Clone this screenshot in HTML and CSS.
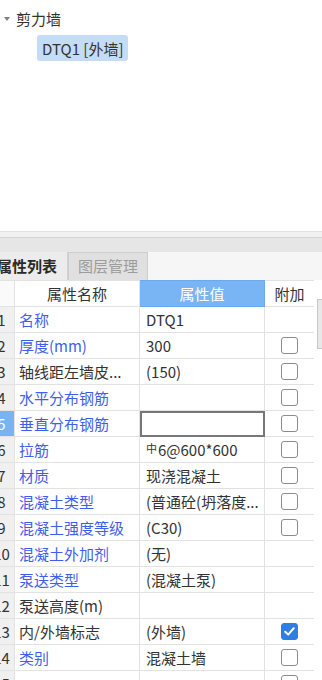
FILE: index.html
```html
<!DOCTYPE html>
<html lang="zh-CN">
<head>
<meta charset="utf-8">
<title>属性列表</title>
<link rel="stylesheet" href="styles.css">
</head>
<body>
<div class="tree">
  <div class="node"><span class="caret"></span><span>剪力墙</span></div>
  <div class="leaf"><span class="sel">DTQ1 [外墙]</span></div>
</div>
<div class="panel">
  <div class="split"></div>
  <div class="strip"></div>
  <div class="tabs">
    <div class="tab active">属性列表</div>
    <div class="tab">图层管理</div>
    <div class="tab-fill"></div>
  </div>
  <div class="grid-wrap">
    <div class="grid-clip">
      <table class="props">
        <colgroup><col class="c-num"><col class="c-name"><col class="c-val"><col class="c-add"></colgroup>
        <thead>
          <tr><th class="num"></th><th>属性名称</th><th class="hl">属性值</th><th>附加</th></tr>
        </thead>
        <tbody>
          <tr><td class="num">1</td><td class="b">名称</td><td class="v">DTQ1</td><td class="add"></td></tr>
          <tr><td class="num">2</td><td class="b">厚度(mm)</td><td class="v">300</td><td class="add"><span class="cb"></span></td></tr>
          <tr><td class="num">3</td><td>轴线距左墙皮...</td><td class="v">(150)</td><td class="add"><span class="cb"></span></td></tr>
          <tr><td class="num">4</td><td class="b">水平分布钢筋</td><td class="v"></td><td class="add"><span class="cb"></span></td></tr>
          <tr><td class="num cur">5</td><td class="b">垂直分布钢筋</td><td class="v edit"></td><td class="add"><span class="cb"></span></td></tr>
          <tr><td class="num">6</td><td class="b">拉筋</td><td class="v"><span class="sym">中</span>6@600*600</td><td class="add"><span class="cb"></span></td></tr>
          <tr><td class="num">7</td><td class="b">材质</td><td class="v">现浇混凝土</td><td class="add"><span class="cb"></span></td></tr>
          <tr><td class="num">8</td><td class="b">混凝土类型</td><td class="v">(普通砼(坍落度...</td><td class="add"><span class="cb"></span></td></tr>
          <tr><td class="num">9</td><td class="b">混凝土强度等级</td><td class="v">(C30)</td><td class="add"><span class="cb"></span></td></tr>
          <tr><td class="num">10</td><td class="b">混凝土外加剂</td><td class="v">(无)</td><td class="add"></td></tr>
          <tr><td class="num">11</td><td class="b">泵送类型</td><td class="v">(混凝土泵)</td><td class="add"></td></tr>
          <tr><td class="num">12</td><td>泵送高度(m)</td><td class="v"></td><td class="add"></td></tr>
          <tr><td class="num">13</td><td>内/外墙标志</td><td class="v">(外墙)</td><td class="add"><span class="cb on"><svg viewBox="0 0 17 17" width="17" height="17"><path d="M4.2 8.8 L7.2 11.6 L12.8 5.2" fill="none" stroke="#fff" stroke-width="2" stroke-linecap="round" stroke-linejoin="round"/></svg></span></td></tr>
          <tr><td class="num">14</td><td class="b">类别</td><td class="v">混凝土墙</td><td class="add"><span class="cb"></span></td></tr>
          <tr><td class="num">15</td><td></td><td class="v"></td><td class="add"><span class="cb"></span></td></tr>
        </tbody>
      </table>
    </div>
    <div class="vscroll"><div class="thumb"></div></div>
  </div>
</div>
</body>
</html>
```

FILE: styles.css
```css
html, body {
  margin: 0;
  padding: 0;
}
body {
  width: 322px;
  height: 680px;
  overflow: hidden;
  background: #fff;
  font-family: "Noto Sans CJK SC", "Microsoft YaHei", sans-serif;
  font-size: 15px;
  color: #333;
}

.tree {
  height: 231px;
  padding-top: 10px;
  box-sizing: border-box;
}
.node {
  display: flex;
  align-items: center;
  height: 18px;
  line-height: 18px;
}
.caret {
  width: 0;
  height: 0;
  border-left: 3px solid transparent;
  border-right: 3px solid transparent;
  border-top: 4px solid #808080;
  margin-left: 4px;
  margin-right: 6px;
}
.leaf {
  margin-top: 7px;
  padding-left: 37px;
}
.sel {
  display: inline-flex;
  align-items: center;
  height: 26px;
  padding: 0 5px;
  background: #c5dcf6;
  border-radius: 3px;
}

.split {
  border-top: 1px solid #e3e3e3;
  border-bottom: 1px solid #d4d4d4;
  height: 5px;
  background: #f1f1f1;
}
.strip {
  height: 14px;
  background: #e6e6e6;
}
.tabs {
  display: flex;
  height: 28px;
  background: #f6f6f6;
}
.tab {
  box-sizing: border-box;
  width: 80px;
  height: 28px;
  line-height: 26px;
  text-align: center;
  background: #e0e0e0;
  color: #9c9c9c;
  border: 1px solid #cdcdcd;
  border-bottom: none;
}
.tab.active {
  margin-left: -8px;
  width: 76px;
  padding-left: 5px;
  text-align: left;
  background: #ececec;
  color: #2a2a2a;
  font-weight: bold;
  border: none;
  border-right: 1px solid #d2d2d2;
  line-height: 28px;
}
.tab-fill {
  flex: 1;
}

.grid-wrap {
  display: flex;
}
.grid-clip {
  width: 314px;
  overflow: hidden;
}
.props {
  border-collapse: collapse;
  table-layout: fixed;
  width: 326px;
  margin-left: -12px;
}
.c-num { width: 26px; }
.c-name { width: 125px; }
.c-val { width: 125px; }
.c-add { width: 50px; }

.props th,
.props td {
  height: 25px;
  padding: 0 0 0 4px;
  border: 1px solid #e2e2e2;
  white-space: nowrap;
  overflow: hidden;
  font-weight: normal;
  color: #333;
  text-align: left;
}
.props th {
  text-align: center;
  padding: 0;
}
.props th.hl {
  background: #79b5f4;
  color: #fff;
  border-color: #6aa9ee;
}
.props .num {
  padding: 0;
  text-align: center;
  background: #f0f0f0;
}
.props th.num {
  background: #fafafa;
}
.props td.cur {
  background: #78b4f4;
  color: #fff;
}
.props td.b {
  color: #3f5ef0;
}
.props td.v {
  padding-left: 6px;
}
.props td.edit {
  outline: 2px solid #777;
  outline-offset: -2px;
}
.props td.add {
  padding: 0;
  text-align: center;
}
.sym {
  font-size: 11px;
  vertical-align: 3px;
  margin-right: 1px;
}
.cb {
  display: block;
  box-sizing: border-box;
  width: 17px;
  height: 17px;
  margin: 0 auto;
  border: 1px solid #8c8c8c;
  border-radius: 3px;
  background: #fff;
}
.cb.on {
  background: #2e7ee6;
  border-color: #2e7ee6;
}
.cb svg {
  display: block;
  margin: -1px;
}

.vscroll {
  width: 8px;
  background: #fff;
}
.thumb {
  margin-top: 19px;
  margin-left: 3px;
  height: 48px;
  background: #e8e8e8;
  border: 1px solid #c8c8c8;
  border-right: none;
}
```
